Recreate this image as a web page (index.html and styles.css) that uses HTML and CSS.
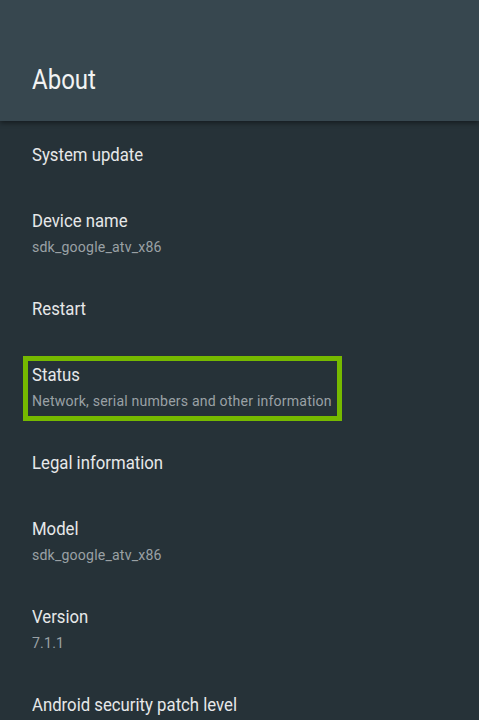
FILE: index.html
```html
<!DOCTYPE html>
<html lang="en">
<head>
<meta charset="utf-8">
<title>About</title>
<link rel="stylesheet" href="styles.css">
</head>
<body>
<div class="screen">
  <header class="header">
    <div class="header-title">About</div>
  </header>
  <main class="list">
    <div class="item"><div class="title">System update</div></div>
    <div class="item"><div class="title">Device name</div><div class="sub">sdk_google_atv_x86</div></div>
    <div class="item"><div class="title">Restart</div></div>
    <div class="item item-focused">
      <div class="focus-box">
        <div class="title">Status</div>
        <div class="sub">Network, serial numbers and other information</div>
      </div>
    </div>
    <div class="item"><div class="title">Legal information</div></div>
    <div class="item"><div class="title">Model</div><div class="sub">sdk_google_atv_x86</div></div>
    <div class="item"><div class="title">Version</div><div class="sub">7.1.1</div></div>
    <div class="item"><div class="title">Android security patch level</div></div>
  </main>
</div>
</body>
</html>
```
FILE: styles.css
```css
html, body {
  margin: 0;
  padding: 0;
  background: #263238;
  height: 100%;
  overflow: hidden;
}
body {
  font-family: Roboto, "Liberation Sans", sans-serif;
}
.screen {
  width: 479px;
  height: 720px;
  overflow: hidden;
  background: #263238;
}
.header {
  position: relative;
  z-index: 1;
  height: 121px;
  box-sizing: border-box;
  padding: 64px 0 0 32px;
  background: #37474f;
  box-shadow: 0 2px 5px rgba(0, 0, 0, 0.45);
}
.header-title {
  font-size: 27px;
  line-height: 32px;
  color: #f2f3f3;
  transform: scaleX(0.89);
  transform-origin: 0 50%;
  white-space: nowrap;
}
.list {
  padding-top: 1px;
}
.item {
  padding: 21px 0 21px 32px;
}
.title {
  font-size: 18px;
  line-height: 24px;
  color: #e6e8e9;
  transform: scaleX(0.93);
  transform-origin: 0 50%;
  white-space: nowrap;
}
.sub {
  margin-top: 6px;
  font-size: 15px;
  line-height: 16px;
  color: #9aa1a5;
  letter-spacing: 0.2px;
  transform: scaleX(0.94);
  transform-origin: 0 50%;
  white-space: nowrap;
}
.item-focused {
  padding: 14px 0 9px 23px;
}
.focus-box {
  width: 319px;
  box-sizing: border-box;
  border: 5px solid #76b900;
  padding: 2px 4px 7px 4px;
}
```
